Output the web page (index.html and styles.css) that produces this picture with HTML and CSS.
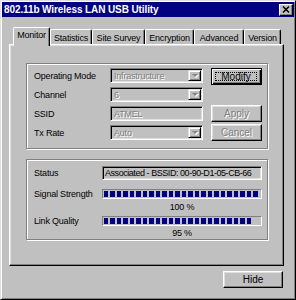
FILE: index.html
```html
<!DOCTYPE html>
<html>
<head>
<meta charset="utf-8">
<link rel="stylesheet" href="styles.css">
</head>
<body>
<div class="window">
  <div class="titlebar">
    <span class="title">802.11b Wireless LAN USB Utility</span>
    <span class="close"><svg width="8" height="7" viewBox="0 0 8 7"><path d="M1 0.5L7 6.5M7 0.5L1 6.5" stroke="#000" stroke-width="1.5"/></svg></span>
  </div>
  <div class="client">
    <div class="tabs">
      <div class="tab active w-monitor">Monitor</div>
      <div class="tab w-stats">Statistics</div>
      <div class="tab w-site">Site Survey</div>
      <div class="tab w-enc">Encryption</div>
      <div class="tab w-adv">Advanced</div>
      <div class="tab w-ver">Version</div>
    </div>
    <div class="panel">
      <div class="group g1">
        <div class="fields">
          <div class="label">Operating Mode</div>
          <div class="combo"><span class="val">Infrastructure</span><span class="dd"><span class="arrow"></span></span></div>
          <div class="label">Channel</div>
          <div class="combo"><span class="val">6</span><span class="dd"><span class="arrow"></span></span></div>
          <div class="label">SSID</div>
          <div class="combo"><span class="val">ATMEL</span></div>
          <div class="label">Tx Rate</div>
          <div class="combo"><span class="val">Auto</span><span class="dd"><span class="arrow"></span></span></div>
        </div>
        <div class="actions">
          <div class="btn default"><span class="focus">Modify</span></div>
          <div class="btn disabled apply">Apply</div>
          <div class="btn disabled cancel">Cancel</div>
        </div>
      </div>
      <div class="group g2">
        <div class="label">Status</div>
        <div class="status">Associated - BSSID: 00-90-D1-05-CB-66</div>
        <div class="label l-signal">Signal Strength</div>
        <div class="bar b-signal"><div class="fill" style="width:100%"></div></div>
        <div class="pct p-signal">100 %</div>
        <div class="label l-link">Link Quality</div>
        <div class="bar b-link"><div class="fill" style="width:95%"></div></div>
        <div class="pct p-link">95 %</div>
      </div>
    </div>
    <div class="footer">
      <div class="btn hide">Hide</div>
    </div>
  </div>
</div>
</body>
</html>
```

FILE: styles.css
```css
* { box-sizing: border-box; }
html, body { margin: 0; padding: 0; background: #c0c0c0; }
body {
  font-family: "Liberation Sans", Arial, sans-serif;
  font-size: 9px;
  letter-spacing: -0.2px;
  color: #000;
}
.window {
  width: 296px;
  height: 300px;
  border: 1px solid;
  border-color: #dfdfdf #000 #000 #dfdfdf;
  box-shadow: inset 1px 1px 0 #fff, inset -1px -1px 0 #808080;
  padding: 1px;
  background: #c0c0c0;
}
.titlebar {
  height: 15px;
  background: #000080;
  color: #fff;
  display: flex;
  align-items: center;
  justify-content: space-between;
  padding: 0 1px 0 2px;
}
.title { font-weight: bold; font-size: 10px; letter-spacing: -0.1px; }
.close {
  width: 14px;
  height: 12px;
  background: #c0c0c0;
  border: 1px solid;
  border-color: #fff #000 #000 #fff;
  box-shadow: inset -1px -1px 0 #808080;
  display: flex;
  align-items: center;
  justify-content: center;
}
.client { padding: 10px 0 0 7px; }
.tabs {
  display: flex;
  align-items: flex-end;
  height: 17px;
  padding-left: 4px;
}
.tab {
  height: 15px;
  border: 1px solid;
  border-bottom: none;
  border-color: #fff #000 transparent #fff;
  border-radius: 2px 2px 0 0;
  box-shadow: inset -1px 0 0 #808080;
  display: flex;
  align-items: center;
  justify-content: center;
  padding-top: 1px;
  white-space: nowrap;
}
.tab.active {
  height: 19px;
  margin-bottom: -2px;
  position: relative;
  z-index: 1;
  background: #c0c0c0;
  align-items: flex-start;
  padding-top: 2px;
}
.w-monitor { width: 37px; }
.w-stats { width: 42px; }
.w-site { width: 53px; }
.w-enc { width: 49px; }
.w-adv { width: 50px; }
.w-ver { width: 37px; }
.panel {
  width: 275px;
  height: 222px;
  border: 1px solid;
  border-color: #fff #000 #000 #fff;
  box-shadow: inset -1px -1px 0 #808080, inset 1px 1px 0 #dfdfdf;
  padding: 18px 0 0 16px;
}
.group {
  width: 242px;
  border: 1px solid #808080;
  box-shadow: inset 1px 1px 0 #fff, 1px 1px 0 #fff;
}
.g1 {
  height: 86px;
  display: flex;
  padding: 4px 0 0 7px;
}
.fields {
  display: grid;
  grid-template-columns: 76px 93px;
  grid-auto-rows: 15px;
  row-gap: 4px;
  align-items: center;
}
.label { white-space: nowrap; }
.combo {
  height: 15px;
  display: flex;
  align-items: center;
  border: 1px solid;
  border-color: #808080 #fff #fff #808080;
  box-shadow: inset 1px 1px 0 #000, inset -1px -1px 0 #dfdfdf;
  padding: 1px 1px 1px 2px;
}
.val {
  flex: 1;
  color: #808080;
  text-shadow: 1px 1px 0 #fff;
  padding-left: 1px;
  white-space: nowrap;
  overflow: hidden;
}
.dd {
  width: 13px;
  height: 11px;
  border: 1px solid;
  border-color: #dfdfdf #000 #000 #dfdfdf;
  box-shadow: inset 1px 1px 0 #fff, inset -1px -1px 0 #808080;
  display: flex;
  align-items: center;
  justify-content: center;
}
.arrow {
  width: 0;
  height: 0;
  border-left: 3px solid transparent;
  border-right: 3px solid transparent;
  border-top: 3px solid #808080;
  filter: drop-shadow(1px 1px 0 #fff);
}
.actions {
  margin-left: 8px;
  width: 51px;
  display: flex;
  flex-direction: column;
}
.btn {
  height: 17px;
  border: 1px solid;
  border-color: #fff #000 #000 #fff;
  box-shadow: inset -1px -1px 0 #808080, inset 1px 1px 0 #dfdfdf;
  background: #c0c0c0;
  display: flex;
  align-items: center;
  justify-content: center;
  letter-spacing: 0;
}
.btn.default {
  border-color: #000;
  box-shadow: inset 1px 1px 0 #fff, inset -1px -1px 0 #000, inset -2px -2px 0 #808080;
  padding: 3px 4px 3px 3px;
}
.focus {
  flex: 1;
  height: 100%;
  border: 1px dotted #000;
  display: flex;
  align-items: center;
  justify-content: center;
  font-size: 10px;
}
.btn.disabled {
  color: #808080;
  text-shadow: 1px 1px 0 #fff;
  font-size: 10px;
}
.apply { margin-top: 20px; }
.cancel { margin-top: 2px; }
.g2 {
  margin-top: 10px;
  height: 81px;
  display: grid;
  grid-template-columns: 68px 160px;
  align-items: center;
  align-content: start;
  padding: 6px 0 0 7px;
}
.status {
  height: 14px;
  border: 1px solid;
  border-color: #808080 #fff #fff #808080;
  box-shadow: inset 1px 1px 0 #000, inset -1px -1px 0 #dfdfdf;
  padding: 0 0 0 2px;
  line-height: 12px;
  letter-spacing: -0.45px;
  white-space: nowrap;
  overflow: hidden;
}
.bar {
  height: 10px;
  border: 1px solid;
  border-color: #808080 #fff #fff #808080;
  padding: 1px;
}
.fill {
  height: 100%;
  background: repeating-linear-gradient(to right, #000080 0 4.5px, transparent 4.5px 6.5px);
}
.l-signal, .b-signal { margin-top: 9px; }
.pct {
  grid-column: 2;
  text-align: center;
  line-height: 12px;
}
.p-signal { margin-top: 2px; }
.l-link, .b-link { margin-top: 3px; }
.p-link { margin-top: 1px; }
.footer {
  width: 275px;
  display: flex;
  justify-content: flex-end;
  padding: 5px 1px 0 0;
}
.hide { width: 60px; font-size: 10px; }
```
